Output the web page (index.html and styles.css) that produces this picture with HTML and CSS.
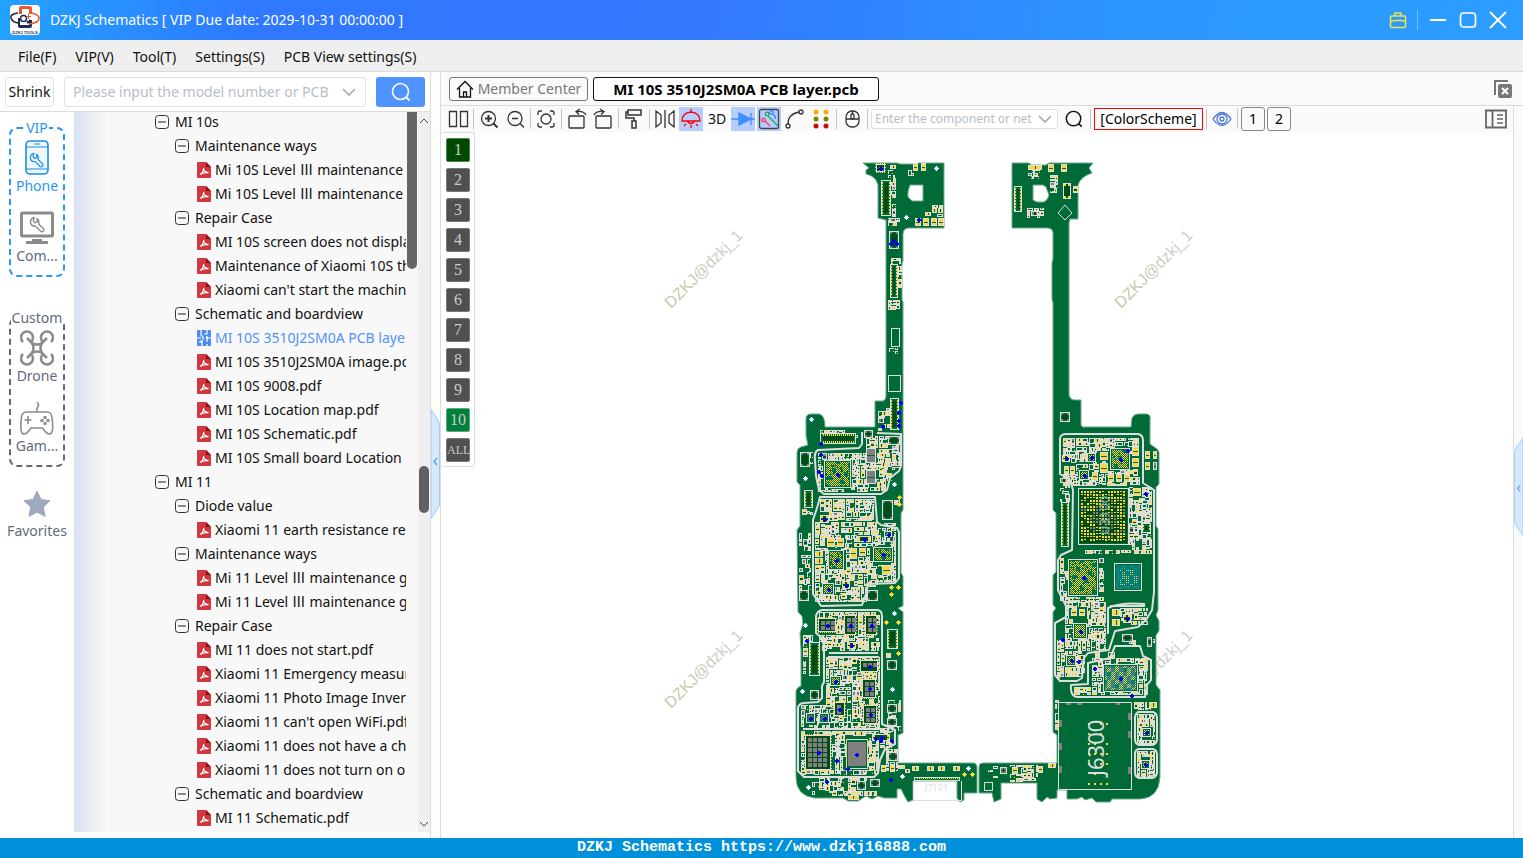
FILE: index.html
```html
<!DOCTYPE html>
<html lang="en">
<head>
<meta charset="utf-8">
<title>DZKJ Schematics</title>
<link rel="stylesheet" href="styles.css">
</head>
<body>
<svg class="defs" aria-hidden="true">
  <symbol id="pdf" viewBox="0 0 14 16"><path d="M1 0h8l5 5v10a1 1 0 0 1-1 1H1a1 1 0 0 1-1-1V1a1 1 0 0 1 1-1z" fill="#d2363f"/><path d="M9 0l5 5H9z" fill="#8f0f1a"/><path d="M3 12.500c2-1 4-4 3.500-6.500 0 3 2.500 5 5 4.500-3-.7-5.500.3-8.500 2z" fill="none" stroke="#fff" stroke-width="1.200"/></symbol>
  <symbol id="pcb" viewBox="0 0 14 16"><rect width="14" height="16" rx="1" fill="#4a8cf7"/><path d="M4 0v5l2 2v3M10 0v4H7M0 8h4M14 8h-4v4M5 16v-4H2M10 16v-2" fill="none" stroke="#fff" stroke-width="1.200"/><circle cx="10" cy="7.500" r="1.300" fill="#fff"/><circle cx="4.500" cy="11.500" r="1.300" fill="#fff"/></symbol>
  <symbol id="minus" viewBox="0 0 14 14"><rect x=".5" y=".5" width="13" height="13" rx="3" fill="none" stroke="#333"/><path d="M3 7h8" stroke="#222"/></symbol>
  <symbol id="wrench" viewBox="0 0 18 18"><path d="M5.500 1.500a5 5 0 0 0-3.800 6.300 4.800 4.800 0 0 0 5.300 3l5 5a2 2 0 0 0 3.300-2.600l-5.200-4.700a5 5 0 0 0-1.600-5.800L8.700 6.200 6 7.300 4.500 5z" fill="none" stroke="currentColor" stroke-width="1.500" stroke-linejoin="round"/></symbol>
  <symbol id="chev" viewBox="0 0 14 8"><path d="M1 1l6 6 6-6" fill="none" stroke="#a0a4ac" stroke-width="1.500"/></symbol>
  <symbol id="lens" viewBox="0 0 20 20"><circle cx="9.500" cy="9.500" r="8" fill="none" stroke="currentColor" stroke-width="1.600"/><path d="M15 15l3.500 3.500" stroke="currentColor" stroke-width="1.800"/></symbol>
</svg>

<header class="titlebar">
  <svg class="logo" viewBox="0 0 30 30"><rect width="30" height="30" rx="4" fill="#fff"/><path d="M9 9V3q0-2 2-2h8q3 0 3 2v6z" fill="#f0562d"/><path d="M12 4h7v5h-7z" fill="#fff"/><path d="M8 13v8q0 2 2 2h10q2 0 2-2v-6" fill="#1c2c58"/><path d="M22 8q8 2 7 6-1 4-10 5" fill="none" stroke="#f0562d" stroke-width="1.600"/><path d="M8 8q-8 1-7 5 2 5 9 5" fill="none" stroke="#1c2c58" stroke-width="1.600"/><path d="M10 10h9v10h-9z" fill="#fff"/><circle cx="13.500" cy="13.500" r="3" fill="none" stroke="#1c2c58" stroke-width="1.500"/><path d="M18.500 9v5M16 11.500h5" stroke="#f0562d"/><circle cx="18" cy="17" r="1.500" fill="#1c2c58"/><text x="15" y="29" class="logo-text">DZKJ TOOLS</text></svg>
  <h1 class="title">DZKJ Schematics [ VIP Due date: 2029-10-31 00:00:00 ]</h1>
  <button class="win gift" aria-label="Toolbox"><svg viewBox="0 0 18 18"><g fill="none" stroke="#f2e24b" stroke-width="1.500"><rect x="1.500" y="5" width="15" height="11.500" rx="1"/><path d="M6 5V2h6v3M2 10h3M13 10h3M5 9.500h8"/></g></svg></button>
  <span class="win-sep"></span>
  <button class="win" aria-label="Minimize"><svg viewBox="0 0 18 18"><path d="M1 9h16" stroke="#fff" stroke-width="2"/></svg></button>
  <button class="win" aria-label="Maximize"><svg viewBox="0 0 18 18"><rect x="1.500" y="2" width="15" height="14" rx="3" fill="none" stroke="#fff" stroke-width="1.700"/></svg></button>
  <button class="win" aria-label="Close"><svg viewBox="0 0 18 18"><path d="M1 1l16 16M17 1L1 17" stroke="#fff" stroke-width="1.800"/></svg></button>
</header>

<nav class="menubar">
  <button>File(F)</button><button>VIP(V)</button><button>Tool(T)</button><button>Settings(S)</button><button>PCB View settings(S)</button>
</nav>

<main class="work">
  <section class="left">
    <form class="finder">
      <button type="button" class="shrink">Shrink</button>
      <label class="combo model"><input type="text" aria-label="Model number" placeholder="Please input the model number or PCB"><svg><use href="#chev"/></svg></label>
      <button type="button" class="go" aria-label="Search"><svg><use href="#lens"/></svg></button>
    </form>
    <div class="browse">
      <nav class="side">
        <section class="group vip"><h2>VIP</h2>
          <button class="active"><svg viewBox="0 0 34 36"><rect x="6" y="1" width="22" height="33" rx="4" fill="#eef7ff" stroke="#1c8fdc" stroke-width="1.600"/><path d="M6 7h22M6 29h22M14 4h6" stroke="#1c8fdc"/><use href="#wrench" x="9" y="12" width="16" height="16"/></svg>Phone</button>
          <button><svg class="gray" viewBox="0 0 34 36"><rect x="1.500" y="3" width="31" height="23" rx="1" fill="none" stroke="currentColor" stroke-width="3"/><path d="M12 29h10v2h6v3H6v-3h6z" fill="currentColor"/><use href="#wrench" x="9" y="6" width="17" height="17"/></svg>Com...</button>
        </section>
        <section class="group custom"><h2>Custom</h2>
          <button><svg class="gray" viewBox="0 0 34 36"><g fill="none" stroke="currentColor" stroke-width="2.600"><path d="M3 12a6 6 0 1 1 8 0M31 12a6 6 0 1 0-8 0M3 24a6 6 0 1 0 8 0M31 24a6 6 0 1 1-8 0M7 8l7 7M27 8l-7 7M7 28l7-7M27 28l-7-7M12 13q5 3 10 0-3 5 0 10-5-3-10 0 3-5 0-10"/></g></svg>Drone</button>
          <button><svg class="gray" viewBox="0 0 34 36"><g fill="none" stroke="currentColor" stroke-width="1.600"><path d="M6 12h22q4 0 4.500 10 1 12-3 12-3 0-7-6H11q-4 6-7 6-4 0-3-12Q1 12 6 12zM17 12V8q3-3 0-6M8 16v8M4.500 20h7"/><circle cx="25" cy="17.500" r="1"/><circle cx="25" cy="23.500" r="1"/><circle cx="22" cy="20.500" r="1"/><circle cx="28" cy="20.500" r="1"/></g></svg>Gam...</button>
        </section>
        <button class="fav"><svg viewBox="0 0 28 28"><path d="M14 1l4 8.500 9 1.200-6.700 6.300 1.800 9.500L14 22l-8.100 4.500L7.700 17 1 10.700l9-1.200z" fill="#9ea9c0" stroke="#9ea9c0" stroke-linejoin="round"/></svg>Favorites</button>
      </nav>
      <div class="tree-wrap">
        <ul class="tree">
          <li class="l1"><svg><use href="#minus"/></svg>MI 10s</li>
          <li class="l2"><svg><use href="#minus"/></svg>Maintenance ways</li>
          <li class="l3"><svg><use href="#pdf"/></svg>Mi 10S Level Ⅲ maintenance guide.pdf</li>
          <li class="l3"><svg><use href="#pdf"/></svg>Mi 10S Level Ⅲ maintenance guide.pdf</li>
          <li class="l2"><svg><use href="#minus"/></svg>Repair Case</li>
          <li class="l3"><svg><use href="#pdf"/></svg>MI 10S screen does not display.pdf</li>
          <li class="l3"><svg><use href="#pdf"/></svg>Maintenance of Xiaomi 10S that.pdf</li>
          <li class="l3"><svg><use href="#pdf"/></svg>Xiaomi can't start the machine.pdf</li>
          <li class="l2"><svg><use href="#minus"/></svg>Schematic and boardview</li>
          <li class="l3 current"><svg><use href="#pcb"/></svg>MI 10S 3510J2SM0A PCB layer.pcb</li>
          <li class="l3"><svg><use href="#pdf"/></svg>MI 10S 3510J2SM0A image.pdf</li>
          <li class="l3"><svg><use href="#pdf"/></svg>MI 10S 9008.pdf</li>
          <li class="l3"><svg><use href="#pdf"/></svg>MI 10S Location map.pdf</li>
          <li class="l3"><svg><use href="#pdf"/></svg>MI 10S Schematic.pdf</li>
          <li class="l3"><svg><use href="#pdf"/></svg>MI 10S Small board Location</li>
          <li class="l1"><svg><use href="#minus"/></svg>MI 11</li>
          <li class="l2"><svg><use href="#minus"/></svg>Diode value</li>
          <li class="l3"><svg><use href="#pdf"/></svg>Xiaomi 11 earth resistance reference.pdf</li>
          <li class="l2"><svg><use href="#minus"/></svg>Maintenance ways</li>
          <li class="l3"><svg><use href="#pdf"/></svg>Mi 11 Level Ⅲ maintenance guide.pdf</li>
          <li class="l3"><svg><use href="#pdf"/></svg>Mi 11 Level Ⅲ maintenance guide.pdf</li>
          <li class="l2"><svg><use href="#minus"/></svg>Repair Case</li>
          <li class="l3"><svg><use href="#pdf"/></svg>MI 11 does not start.pdf</li>
          <li class="l3"><svg><use href="#pdf"/></svg>Xiaomi 11 Emergency measures.pdf</li>
          <li class="l3"><svg><use href="#pdf"/></svg>Xiaomi 11 Photo Image Inversion.pdf</li>
          <li class="l3"><svg><use href="#pdf"/></svg>Xiaomi 11 can't open WiFi.pdf</li>
          <li class="l3"><svg><use href="#pdf"/></svg>Xiaomi 11 does not have a charge.pdf</li>
          <li class="l3"><svg><use href="#pdf"/></svg>Xiaomi 11 does not turn on or.pdf</li>
          <li class="l2"><svg><use href="#minus"/></svg>Schematic and boardview</li>
          <li class="l3"><svg><use href="#pdf"/></svg>MI 11 Schematic.pdf</li>
        </ul>
        <div class="inner-thumb"></div>
        <div class="scroll"><svg viewBox="0 0 10 6"><path d="M1 5l4-4 4 4" fill="none" stroke="#444"/></svg><div class="thumb"></div><svg viewBox="0 0 10 6"><path d="M1 1l4 4 4-4" fill="none" stroke="#444"/></svg></div>
      </div>
    </div>
  </section>

  <div class="splitter"><button aria-label="Collapse file list"><svg viewBox="0 0 9 110"><path d="M0 .5l6 9q2.500 3 2.500 7v78q0 3-2.500 6l-6 9z" fill="#d6e9fd" stroke="#9cc9f5"/><path d="M6 49l-3 3.500 3 3.500" fill="none" stroke="#459ff0" stroke-width="1.200"/></svg></button></div>

  <section class="view">
    <div class="tabs">
      <button class="tab home"><svg viewBox="0 0 18 18"><path d="M1 9.500L9 1.500l8 8M3.500 8v9h11V8M7.500 17v-5h3v5" fill="none" stroke="#111" stroke-width="1.300"/></svg>Member Center</button>
      <button class="tab open">MI 10S 3510J2SM0A PCB layer.pcb</button>
      <button class="closeall" aria-label="Close all"><svg viewBox="0 0 18 18"><path d="M1 15V1h13" fill="none" stroke="#777" stroke-width="2"/><rect x="4" y="4" width="14" height="14" rx="2" fill="#777"/><path d="M8 8l6 6M14 8l-6 6" stroke="#fff" stroke-width="2"/></svg></button>
    </div>
    <div class="lower">
      <div class="stage">
        <div class="tools">
          <button aria-label="Split view"><svg viewBox="0 0 24 24"><path d="M3.500 4.500h7v15h-7zM14.500 4.500h7v15h-7z"/></svg></button><i></i>
          <button aria-label="Zoom in"><svg viewBox="0 0 24 24"><circle cx="11.500" cy="11.500" r="7"/><path d="M16.500 16.500l4 4M8 11.500h7M11.500 8v7" stroke-width="2"/></svg></button>
          <button aria-label="Zoom out"><svg viewBox="0 0 24 24"><circle cx="12" cy="11.500" r="7"/><path d="M17 16.500l4 4M9 11.500h6"/></svg></button><i></i>
          <button aria-label="Fit"><svg viewBox="0 0 24 24"><circle cx="12" cy="12" r="5"/><path d="M4 8V6q0-2 2-2h2M16 4h2q2 0 2 2v2M20 16v2q0 2-2 2h-2M8 20H6q-2 0-2-2v-2"/></svg></button><i></i>
          <button aria-label="Rotate left"><svg viewBox="0 0 24 24"><rect x="4" y="9" width="15" height="12" rx="1"/><path d="M21 8q-2-4-9-3.500M15 2l-4 2.500 3 3"/></svg></button>
          <button aria-label="Rotate right"><svg viewBox="0 0 24 24"><rect x="5" y="9" width="15" height="12" rx="1"/><path d="M3 8q2-4 9-3.500M9 2l4 2.500-3 3"/></svg></button><i></i>
          <button aria-label="Paint"><svg viewBox="0 0 24 24"><path d="M6 3h13v5H6zM6 5H4v6h8v3M10 14h4v7h-4z" stroke-width="1.500"/></svg></button><i></i>
          <button aria-label="Mirror"><svg viewBox="0 0 24 24"><path d="M3 4v16l5-4V8zM21 4v16l-5-4V8zM12 3v18"/></svg></button>
          <button class="on" aria-label="Lamp"><svg class="red" viewBox="0 0 24 24"><path d="M12 2v3M3 14q0-8 9-9 9 1 9 9zM8 14q4 5 8 0M12 18v3M7 17l-2 2M17 17l2 2"/></svg></button>
          <button class="td">3D</button>
          <button class="on" aria-label="Diode"><svg class="blue" viewBox="0 0 24 24"><path d="M0 12h24M20 6v12"/><path d="M8 6l12 6-12 6z" fill="#3f8dff"/></svg></button>
          <button class="on" aria-label="Nets"><svg viewBox="0 0 24 24"><rect x="2.500" y="2.500" width="19" height="19" rx="2" stroke="#444"/><circle cx="6.500" cy="13" r="1.800" stroke="#ff3a4c"/><path d="M8 14l5 5" stroke="#ff3a4c"/><circle cx="10" cy="7" r="1.800" stroke="#20a850"/><circle cx="14.500" cy="5.500" r="1.800" stroke="#2c86ff"/><path d="M16 7q3 2 2 5" stroke="#2c86ff"/><path d="M11 9l10 10" stroke="#20a850"/></svg></button>
          <button aria-label="Curve"><svg viewBox="0 0 24 24"><circle cx="5" cy="19" r="2"/><circle cx="18" cy="5" r="2"/><path d="M5 17Q5 7 16 5"/></svg></button>
          <button aria-label="Pins"><svg class="dots" viewBox="0 0 24 24"><g fill="#ffab00"><circle cx="7" cy="5" r="2.500"/><circle cx="17" cy="5" r="2.500"/></g><g fill="#7c8500"><circle cx="7" cy="12" r="2.500"/><circle cx="17" cy="12" r="2.500"/></g><g fill="#cf0909"><circle cx="7" cy="19" r="2.500"/><circle cx="17" cy="19" r="2.500"/></g></svg></button><i></i>
          <button aria-label="Mouse"><svg viewBox="0 0 24 24"><rect x="6" y="4" width="13" height="16" rx="6"/><path d="M6 12h13M12.500 4v3"/><rect x="11" y="7" width="3" height="5" rx="1"/></svg></button><i></i>
          <label class="combo net"><input type="text" aria-label="Component or net" placeholder="Enter the component or net"><svg><use href="#chev"/></svg></label>
          <button class="find" aria-label="Find"><svg viewBox="0 0 20 20"><use href="#lens"/></svg></button><i></i>
          <button class="scheme">[ColorScheme]</button><i></i>
          <button aria-label="Visibility"><svg viewBox="0 0 24 24"><g stroke="#4777d9"><path d="M3 12q9-13 18 0-9 13-18 0z"/><circle cx="12" cy="12" r="5"/><circle cx="12" cy="12" r="2"/></g></svg></button><i></i>
          <button class="num">1</button>
          <button class="num">2</button>
          <button class="panel" aria-label="Side panel"><svg viewBox="0 0 22 20"><path d="M1 1.500h20v17H1zM7.500 1.500v17" fill="none" stroke="#666" stroke-width="1.800"/><path d="M12 6h6M12 10h6M12 14h6" stroke="#666"/></svg></button>
        </div>
        <div class="canvas">
          <svg class="board" viewBox="441 132 1072 706" role="img" aria-label="PCB layout">
            <defs><linearGradient id="wm"><stop offset="0" stop-color="#c9c4a4"/><stop offset="1" stop-color="#d0d0d0"/></linearGradient></defs>
            <g class="marks">
              <text transform="translate(671 309) rotate(-45)">DZKJ@dzkj_1</text>
              <text transform="translate(1121 309) rotate(-45)">DZKJ@dzkj_1</text>
              <text transform="translate(671 709) rotate(-45)">DZKJ@dzkj_1</text>
              <text transform="translate(1121 709) rotate(-45)">DZKJ@dzkj_1</text>
            </g>
            <g class="sub">
              <path fill-rule="evenodd" d="M863 163L897 163 900 164H916L918 163H944V228H908Q903 229 903 234V261L902 263V300L903 302V510L901 513V573L903 576V606L898 608 903 612V733L898 735V763H973Q977 763 977 767V793H964V800L960 802 957 798V781H913V800L908 802 905 797 901 789H897V798H884L878 796 872 799 866 796 858 801H848L843 798H815Q796 796 796 777V691Q797 687 801 686V650L800 633 803 624 802 616 798 612 797 530 800 526V485L797 482V453Q797 448 801 447L808 445 806 436V419Q806 414 811 414H819Q825 415 825 427H875V401H883Q886 400 886 396V220L878 218V185Q876 176 866 174V170L869 168ZM910 185Q907 192 908 197L912 201H923V185Z"/>
              <path fill-rule="evenodd" d="M1012 163H1029L1031 165H1046L1049 163H1093L1089 168 1092 173Q1080 177 1078 185V219H1070L1069 223V395Q1070 400 1075 400H1081V425Q1082 428 1085 427H1131L1132 418Q1134 414 1138 414H1147Q1151 415 1150 420V444L1157 449 1159 452V484L1156 487V526L1158 529V610L1156 615 1159 621V631L1156 635V685L1160 690V777Q1159 798 1140 799H1112L1110 802H1096L1092 798 1085 800 1082 797 1077 799H1067V790H1057V798L1050 799 1047 797 1042 802 1037 799V783H1001V799L994 802 992 793H979V767Q979 763 983 763H1057V735L1053 732V612L1056 608 1053 605V575L1056 572V513L1053 510V303L1052 299V263L1053 259V232Q1052 228 1048 228H1012ZM1033 185V200L1037 202H1044Q1048 200 1049 195L1046 187 1043 185Z"/>
            </g>
            <g id="parts"></g>
            <g class="shield">
              <path d="M862 432V444L859 448 818 450Q814 452 815 460L816 476 819 490 824 494H881L887 490 890 478 899 471 901 466V434L877 433"/>
              <path d="M820 497H875L877 522 881 525 897 528 899 532V578L895 583 868 584 866 594 862 605 821 606 813 594V520L817 508Z"/>
              <path d="M822 610H878Q882 611 882 616V724L895 730V744L885 749 880 760 878 773 874 777H804L798 771V708Q799 703 804 703L818 702 822 698V686L824 682V640L816 633V616Q817 611 822 610ZM829 653H878M803 729H881M838 735V772M828 657H879"/>
              <path d="M1066 434H1138Q1143 435 1143 440V483L1154 490V592L1152 610 1146 620 1138 627 1115 631 1109 650 1088 653 1084 658 1082 678 1077 681H1060L1055 675V623L1066 617 1067 608 1058 590V560L1061 555 1072 550 1073 490 1070 480 1060 474V438Q1061 434 1066 434"/>
              <path d="M1115 646H1140L1143 656 1151 660V680L1147 685 1145 697H1078Q1070 697 1071 685L1088 684V663L1110 658ZM1110 606H1145M1108 634V608Q1120 602 1145 604"/>
              <path d="M1139 712H1153Q1157 713 1157 718V740Q1156 745 1151 745H1139Q1135 744 1135 739V717Q1136 712 1139 712ZM1139 749H1153Q1157 750 1157 755V773Q1156 778 1151 778H1139Q1135 777 1135 772V753Q1136 749 1139 749Z"/>
            </g>
            <g id="chips"></g>
            <g class="thin"><path d="M1058.500 702.500H1131.500V789.500H1058.500ZM1065 205l7 8-7 7-7-7zM913.500 781V800.500H961.500V781"/></g>
            <text class="silk big" transform="translate(1104 776) rotate(-90)">J6300</text>
            <text class="silk mid" transform="translate(1109 535) rotate(-90)">U3100</text>
            <text class="silk small" x="925" y="791">J7101</text>
          </svg>
          <div class="layers">
            <button class="first">1</button><button>2</button><button>3</button><button>4</button><button>5</button><button>6</button><button>7</button><button>8</button><button>9</button><button class="ten">10</button><button>ALL</button>
          </div>
        </div>
      </div>
      <div class="edge"><button aria-label="Open details"><svg viewBox="0 0 10 110"><path d="M10 .5l-7 10Q.5 14 .5 18v74q0 4 2.500 7l7 10z" fill="#d6e9fd" stroke="#9cc9f5"/><path d="M7 53l-3 3.500 3 3.500" fill="none" stroke="#459ff0" stroke-width="1.200"/></svg></button></div>
    </div>
  </section>
</main>
<footer class="status">DZKJ Schematics https://www.dzkj16888.com</footer>
<script src="board.js"></script>
</body>
</html>
```
FILE: styles.css
```css
* { box-sizing: border-box; }
body { margin: 0; height: 100vh; display: flex; flex-direction: column; overflow: hidden; font: 14px/24px "Noto Sans", "Open Sans", "Noto Sans CJK SC", sans-serif; color: #111; background: #fff; }
button { font: inherit; color: inherit; padding: 0; border: 0; background: none; cursor: pointer; }
svg { display: block; }
.defs { position: absolute; width: 0; height: 0; }

.titlebar { height: 40px; flex: none; display: flex; align-items: center; gap: 12px; padding: 0 16px 0 10px; color: #fff; background: linear-gradient(100deg, #22a3ff 0, #2f78ff 17%, #3377ff 45%, #2c97ff 75%, #2c9dff 100%); }
.logo { width: 30px; height: 30px; }
.logo-text { font: bold 4px "Liberation Sans", sans-serif; text-anchor: middle; fill: #1c2c58; }
.title { flex: 1; margin: 0 0 0 -2px; font-size: 14px; font-weight: 400; }
.win { width: 18px; height: 18px; }
.win svg { width: 18px; height: 18px; }
.win-sep { width: 1px; height: 20px; margin-right: -1px; margin-left: -2px; background: #6dbcff; }

.menubar { height: 32px; flex: none; display: flex; align-items: center; gap: 19px; padding: 2px 18px 0; background: #efefef; border-bottom: 1px solid #dcdcdc; }

.work { flex: 1; min-height: 0; display: flex; }
.left { width: 431px; flex: none; display: flex; flex-direction: column; border-right: 1px solid #dcdcdc; }
.finder { height: 40px; flex: none; display: flex; align-items: center; padding: 0 5px; border-bottom: 1px solid #dcdcdc; }
.shrink { width: 49px; height: 30px; border: 1px solid #dcdfe6; border-radius: 4px; background: #fff; }
.combo { display: flex; align-items: center; border: 1px solid #dcdfe6; border-radius: 3px; background: #fff; }
.combo input { flex: 1; min-width: 0; padding: 0; border: 0; outline: 0; background: none; font: inherit; }
.combo input::placeholder { color: #b9bdc6; opacity: 1; }
.combo svg { width: 14px; height: 8px; }
.model { flex: 1; height: 30px; margin: 0 10px; padding: 0 9px 0 8px; gap: 4px; }
.go { width: 49px; height: 30px; display: grid; place-items: center; border-radius: 3px; color: #fff; background: #4f93ff; }
.go svg { width: 20px; height: 20px; }

.browse { flex: 1; min-height: 0; display: flex; }
.side { width: 74px; flex: none; display: flex; flex-direction: column; align-items: center; padding-top: 15px; color: #626a7a; line-height: 20px; }
.side button { display: flex; flex-direction: column; align-items: center; }
.group { width: 56px; height: 150px; display: flex; flex-direction: column; align-items: center; gap: 14px; border: 2px dashed #626a7a; border-radius: 8px; }
.group h2 { margin: -11px 0 -12px; padding: 0 1px; font-size: 14px; font-weight: 400; line-height: 20px; background: #fff; }
.group svg { width: 34px; height: 36px; }
.vip { border-color: #2b96f3; }
.vip h2, .active { color: #2b96f3; }
.custom { margin-top: 40px; }
.gray { color: #8c8c8c; }
.fav { margin-top: 23px; gap: 3px; }
.fav svg { width: 28px; height: 28px; }

.tree-wrap { flex: 1; min-width: 0; display: flex; margin-bottom: 6px; background: linear-gradient(90deg, #d7e1f2 0, #eceef3 18px, #f8f8f8 34px); }
.tree { flex: 1; min-width: 0; margin: -2px 0 0; padding: 0; overflow: hidden; list-style: none; }
.tree li { height: 24px; display: flex; align-items: center; gap: 6px; white-space: nowrap; }
.tree svg { width: 14px; height: 14px; flex: none; }
.l1 { padding-left: 81px; }
.l2 { padding-left: 101px; }
.tree .l3 { padding-left: 123px; gap: 4px; }
.tree .l3 svg { height: 16px; }
.current { color: #4f93ff; }
.inner-thumb { width: 10px; height: 157px; margin: 0 1px; border-radius: 0 0 5px 5px; background: #666; }
.scroll { width: 12px; display: flex; flex-direction: column; align-items: center; padding: 6px 0 5px; background: #efefef; }
.scroll svg { width: 10px; height: 6px; }
.thumb { width: 10px; height: 47px; margin: 342px 0 auto; border-radius: 5px; background: #606060; }

.splitter { width: 10px; flex: none; display: flex; align-items: center; background: #fafffa; border-right: 1px solid #dcdcdc; }
.splitter button { width: 9px; height: 110px; margin-top: 18px; }
.splitter svg { width: 9px; height: 110px; }
.view { flex: 1; min-width: 0; display: flex; flex-direction: column; }
.tabs { height: 34px; flex: none; display: flex; align-items: center; gap: 5px; padding: 0 11px 0 8px; background: #fafafa; border-bottom: 1px solid #dcdcdc; }
.tab { height: 24px; display: flex; align-items: center; justify-content: center; border: 1px solid #111; border-radius: 3px; line-height: 20px; }
.home { width: 139px; gap: 4px; border-color: #777; color: #777; }
.home svg { width: 18px; height: 18px; }
.open { width: 286px; font-size: 15px; font-weight: 700; color: #000; background: #fff; }
.closeall { margin-left: auto; }
.closeall svg { width: 18px; height: 18px; }
.lower { flex: 1; min-height: 0; display: flex; }
.stage { flex: 1; min-width: 0; display: flex; flex-direction: column; }
.tools { height: 26px; flex: none; display: flex; align-items: center; gap: 2px; padding: 0 5px; background: #fafafa; }
.tools i { width: 1px; height: 20px; margin: 0 1px; background: #c4c4c4; }
.tools button { width: 24px; height: 24px; flex: none; display: grid; place-items: center; }
.tools button svg { width: 24px; height: 24px; fill: none; stroke: #333; stroke-width: 1.3px; }
.tools .on { background: #b6ceff; }
.tools .red { stroke: #f00; }
.tools .blue { stroke: #3f8dff; }
.tools .dots { stroke: none; }
.tools .find { width: 27px; }
.tools .find svg { width: 18px; height: 18px; stroke: none; }
.tools .net { width: 187px; height: 20px; padding: 0 5px 0 3px; gap: 4px; font-size: 12px; }
.tools .scheme { width: 109px; height: 22px; border: 1px solid #f00; color: #000; background: #fff; line-height: 18px; }
.tools .num { border: 1px solid #888; border-radius: 3px; color: #000; line-height: 20px; }
.tools .panel { margin-left: auto; }
.tools .panel svg { width: 22px; height: 20px; }
.canvas { position: relative; flex: 1; min-height: 0; }
.board { width: 100%; height: 100%; }
.layers { position: absolute; left: 0; top: 0; display: flex; flex-direction: column; gap: 6px; padding: 5px 4px 4px 5px; border: 1px solid #dcdcdc; border-left: 0; border-radius: 3px; background: #fff; }
.layers button { width: 24px; height: 24px; border: 1px solid #777; border-radius: 2px; color: #ccc; background: #505050; font: 16px/18px "Liberation Serif", serif; }
.layers button:last-child { font-size: 12px; }
.layers .first { background: #004a00; border-color: #4a804a; }
.layers .ten { background: #00803c; border-color: #5aac80; }
.edge { width: 10px; flex: none; display: flex; flex-direction: column; justify-content: center; background: #fafafa; border-left: 1px solid #dcdcdc; }
.edge button { width: 9px; height: 110px; margin-top: 30px; }
.edge svg { width: 9px; height: 110px; }
.status { height: 20px; flex: none; text-align: center; color: #fff; background: #0091da; font: bold 15px/20px "Liberation Mono", monospace; }

.marks { font-family: "Liberation Sans", sans-serif; font-size: 16px; fill: url(#wm); }
.sub { fill: #006b37; stroke: #6ca88a; stroke-width: 1px; }
.shield { fill: none; stroke: #dedede; stroke-width: 2px; stroke-linejoin: round; }
.thin { fill: none; stroke: #dedede; }
.silk { font-family: "Noto Sans", sans-serif; fill: #dedede; }
.big { font-size: 22px; }
.mid { font-size: 13px; fill: #8fc4b4; }
.small { font-size: 9px; }
```
FILE: board.js
```javascript
(function () {
  var NS = "http://www.w3.org/2000/svg";
  var SILK = "#dedede", GOLD = "#ffd633", GRAY = "#808080", DARK = "#004d18", BASE = "#006b37", BLUE = "#0000f0", TEAL = "#008078";
  var seed = 10351;
  function rnd() { seed = (seed * 1664525 + 1013904223) % 4294967296; return seed / 4294967296; }
  function pick(a, b) { return a + Math.floor(rnd() * (b - a + 1)); }

  function layer(id) {
    var order = [SILK, BASE, DARK, TEAL, GRAY, GOLD, BLUE, "#ffffff"], d = {};
    order.forEach(function (c) { d[c] = ""; });
    return {
      box: function (c, x, y, w, h) { d[c] += "M" + x + " " + y + "h" + w + "v" + h + "h" + -w + "z"; },
      flush: function () {
        order.forEach(function (c) {
          var p = document.createElementNS(NS, "path");
          p.setAttribute("d", d[c]); p.setAttribute("fill", c); p.setAttribute("shape-rendering", "crispEdges");
          document.getElementById(id).appendChild(p);
        });
      }
    };
  }
  var parts = layer("parts"), chips = layer("chips");

  /* Areas packed with passives: x, y, width, height, fill ratio */
  var areas = [
    [818,453,68,39,1],[866,436,34,34,.95],[884,470,8,12,.9],[820,499,54,22,1],[815,522,63,80,1],[878,528,18,54,1],
    [819,612,61,40,.95],[826,657,54,72,.95],[801,705,25,23,.9],[801,731,78,44,.95],[880,728,12,20,.9],
    [812,778,66,18,.65],[800,452,14,16,.8],[802,490,11,26,.6],[799,533,12,70,.7],[803,635,10,44,.85],
    [878,405,24,26,.75],[888,700,14,32,.8],[886,749,12,22,.9],
    [820,430,38,10,.8],[886,640,14,18,.5],[898,765,12,8,.7],[884,500,16,8,.5],[884,518,14,8,.8],
    [891,258,10,8,.8],[898,266,5,22,.8],[888,300,13,10,.9],[889,348,10,6,.9],[888,165,8,52,.7],[888,218,12,8,.9],
    [932,205,11,12,.7],[908,170,6,6,.9],[889,379,10,11,.5],[925,212,7,4,.9],
    [1063,438,77,48,1],[1129,487,23,63,.95],[1060,478,10,24,.7],[1082,550,70,4,.7],
    [1060,558,44,44,.85],[1065,602,41,49,1],[1057,640,8,38,.95],[1065,651,20,27,.95],[1112,608,36,18,.95],
    [1095,652,20,6,.8],[1092,658,56,37,1],[1074,687,18,8,.9],[1137,714,18,30,1],[1137,751,18,26,1],
    [1134,702,20,8,.9],[1055,700,4,30,.8],[1010,765,28,17,.95],[988,766,14,12,.5],
    [1027,208,18,10,.9],[1050,175,8,18,.8],[1073,186,6,8,.8],[1028,166,12,14,.7],[1146,634,9,12,.6],[1120,640,24,6,.7]
  ];
  /* Packages: kind, x, y, width, height */
  var packs = [
    ["bga",824,460,27,28],["gray",866,448,10,15],["gray",866,470,10,14],["qfn",888,436,12,9],["conn",820,433,36,11],
    ["qfn",800,452,10,15],["conn",804,490,9,18],["qfn",882,500,11,20],["mark",820,515,9,8],["bga",828,550,16,20],
    ["bga",873,547,20,15],["mark",857,536,14,6],["gold",827,538,8,9],["gold",837,538,7,9],["gold",850,548,7,11],["gold",859,548,7,8],["gold",815,551,8,6],["gold",815,558,8,6],["bga",822,583,12,12],["mark",842,581,8,8],["gold",882,565,9,10],["bga",884,531,8,6],
    ["quad",818,618,18,14],["quad",844,615,12,20],["quad",865,615,12,20],["conn",809,642,11,34],["quad",860,660,18,12],
    ["quad",862,679,14,19],["quad",863,705,14,19],["bga",830,676,11,10],["quad",834,702,11,14],["dice",806,713,9,10],["dice",819,713,10,10],
    ["quad",805,735,26,35],["slab",846,739,22,30],["mark",872,734,18,7],["mark",847,642,9,7],
    ["conn",887,629,11,20],["qfn",887,660,10,10],["qfn",887,704,10,9],["qfn",887,718,10,8],["qfn",888,752,10,9],["qfn",870,779,10,8],
    ["qfn",867,590,11,11],["qfn",799,590,10,11],["qfn",810,690,9,10],["qfn",864,430,9,8],["qfn",857,781,9,9],
    ["conn",881,180,10,36],["qfn",889,231,10,18],["conn",890,264,8,34],["frame",891,328,9,19],["frame",888,375,13,17],["conn",890,398,9,32],
    ["quad",876,164,9,8],["gold",913,163,5,8],["gold",921,163,5,8],["gold",915,218,6,8],["gold",923,218,6,8],["gold",931,218,6,8],["gold",938,218,6,8],
    ["conn",1014,186,8,26],["gold",1028,165,14,5],["gold",1048,164,6,8],["gold",1061,164,6,8],["mark",1063,183,8,16],
    ["qfn",1060,412,10,10],["bga",1110,448,20,22],["mark",1062,455,8,7],["bga",1087,453,9,9],["bga",1079,470,10,10],
    ["soc",1078,488,51,57],["conn",1061,502,8,45],["bga",1068,559,30,37],["chip",1114,563,28,28],
    ["bga",1073,623,14,16],["bga",1066,655,10,11],["mark",1092,665,5,6],["big",1103,664,35,28],["qfn",1122,634,11,8],["gold",1112,609,8,7],["gold",1112,619,8,7],
    ["mark",1123,614,8,9],["bga",1142,728,9,9],["bga",1141,760,9,9],["qfn",1147,637,5,10],
    ["gold",1145,451,5,8],["gold",1145,462,5,8],["gold",1153,451,4,8],["gray",1153,462,4,8],["gold",1133,488,8,8],["conn",1142,523,9,10],
    ["gold",1100,452,8,8],["gold",1100,463,8,10],["gold",1064,466,5,8],["gold",1070,466,5,8],["gold",1092,472,6,9],
    ["gold",1108,474,6,8],["gold",1116,474,6,8],["gold",1124,474,6,8],["gold",1132,447,7,9],["gold",1132,458,7,9],
    ["gold",912,766,7,5],["gold",927,766,7,5],["gold",938,766,7,5],["gold",953,766,7,5],["conn",914,777,46,4],["gold",848,795,11,5],
    ["gold",1149,702,8,6],["qfn",1000,767,7,7],["gold",1012,767,6,7],["gold",1038,766,5,7],["gold",1048,763,8,5],["gold",1071,609,6,7],["gold",1079,609,6,7],["frame",984,782,9,9],["gold",881,765,5,7],["gold",890,765,5,7]
  ];
  var cuts = packs.map(function (p) { return p.slice(1); });

  function taken(x, y, w, h) {
    return cuts.some(function (r) { return x < r[0] + r[2] && x + w > r[0] && y < r[1] + r[3] && y + h > r[1]; });
  }

  /* One passive; turned parts have their pads above each other */
  function passive(x, y, w, h, turned) {
    var k = rnd(), c = k < .88 ? GOLD : GRAY, n;
    if (k < .14) {
      parts.box(SILK, x, y, 1, h); parts.box(SILK, x, y, w, 1);
      parts.box(GOLD, x + w - 1, y + h - 1, 1, 1);
      return;
    }
    parts.box(SILK, x, y, w, h);
    if (w < 3 || h < 3) {
      parts.box(k < .6 ? GOLD : DARK, x + (w > 2 ? 1 : 0), y + (h > 2 ? 1 : 0), 1, 1);
      return;
    }
    parts.box(k < .5 ? BASE : DARK, x + 1, y + 1, w - 2, h - 2);
    if (k < .32) return;
    if (turned) {
      n = Math.max(1, Math.floor(h / 2) - 1);
      parts.box(c, x + 1, y + 1, w - 2, n);
      parts.box(c, x + 1, y + h - 2, w - 2, 1);
    } else {
      n = Math.max(1, Math.floor(w / 2) - 1);
      parts.box(c, x + 1, y + 1, n, h - 2);
      parts.box(c, x + w - 2, y + 1, 1, h - 2);
    }
  }

  function block(bx, by, bw, bh, fill) {
    var turned = rnd() < .5, lenU = turned ? bh : bw, lenV = turned ? bw : bh;
    for (var v = 0; v < lenV - 1;) {
      var row = Math.min(pick(3, 5), lenV - v);
      for (var u = 0; u < lenU - 1;) {
        var n = Math.min(pick(2, 7), lenU - u);
        var x = turned ? bx + v : bx + u, y = turned ? by + u : by + v;
        while (n > 2 && taken(x, y, turned ? row : n, turned ? n : row)) n--;
        var w = turned ? row : n, h = turned ? n : row;
        if (rnd() < fill && !taken(x, y, w, h)) passive(x, y, w, h, turned);
        u += n + (rnd() < .3 ? 1 : 0);
      }
      v += row + (rnd() < .2 ? 1 : 0);
    }
  }
  areas.forEach(function (a) {
    for (var y = a[1]; y < a[1] + a[3] - 1; y += 13)
      for (var x = a[0]; x < a[0] + a[2] - 1; x += 13)
        block(x, y, Math.min(13, a[0] + a[2] - x), Math.min(13, a[1] + a[3] - y), a[4]);
  });

  function frame(x, y, w, h) {
    chips.box(SILK, x, y, w, h);
    chips.box(BASE, x + 1, y + 1, w - 2, h - 2);
  }
  function dot(x, y) { chips.box(BLUE, x - 1, y, 4, 2); chips.box(BLUE, x, y - 1, 2, 4); }

  packs.forEach(function (p) {
    var t = p[0], x = p[1], y = p[2], w = p[3], h = p[4], i, j, c;
    frame(x, y, w, h);
    if (t === "gold" || t === "gray") {
      c = t === "gold" ? GOLD : GRAY;
      if (w > h) {
        chips.box(c, x + 1, y + 1, Math.floor(w / 2) - 1, h - 2);
        chips.box(c, x + Math.floor(w / 2) + 1, y + 1, w - Math.floor(w / 2) - 2, h - 2);
      } else {
        chips.box(c, x + 1, y + 1, w - 2, Math.floor(h / 2) - 1);
        chips.box(c, x + 1, y + Math.floor(h / 2) + 1, w - 2, h - Math.floor(h / 2) - 2);
      }
    } else if (t === "soc") {
      chips.box(DARK, x + 2, y + 2, w - 4, h - 4);
      for (j = y + 3; j < y + h - 3; j += 3) for (i = x + 3; i < x + w - 3; i += 3) {
        var mid = Math.abs(i - x - w / 2) < 13 && Math.abs(j - y - h / 2) < 15, r = rnd();
        c = r < (mid ? .5 : .86) ? GOLD : (r < .92 ? GRAY : null);
        if (c) chips.box(c, i, j, 2, r < .3 ? 1 : 2);
      }
    } else if (t === "bga" || t === "chip" || t === "big" || t === "dice") {
      if (t === "bga" || t === "dice") chips.box(BASE, x + 1, y + 1, w - 2, h - 2);
      else chips.box(TEAL, x + 2, y + 2, w - 4, h - 4);
      for (j = y + 2; j < y + h - 2; j++) for (i = x + 2; i < x + w - 2; i++) {
        if (t === "chip" ? (i % 2 || j % 2) : (i + j) % 2) continue;
        var edge = i - x < 6 || x + w - i < 6 || j - y < 6 || y + h - j < 6;
        var patch = (((i - x) >> 2) * 3 + ((j - y) >> 2) * 5) % 7;
        if (t === "bga") c = w > 14 && patch === 2 ? TEAL : (w > 14 && rnd() < .15 ? null : GOLD);
        else if (t === "big") c = patch < 3 ? GOLD : patch < 6 ? GRAY : null;
        else if (t === "chip") c = edge ? (patch < 4 ? SILK : GRAY) : (patch < 4 ? GOLD : null);
        else c = GRAY;
        if (c) chips.box(c, i, j, 1, 1);
      }
      if (t !== "chip") dot(x + (w >> 1), y + (h >> 1));
    } else if (t === "quad") {
      chips.box(DARK, x + 1, y + 1, w - 2, h - 2);
      for (j = y + 3; j + 4 < y + h; j += 5) for (i = x + 3; i + 3 < x + w; i += 5) chips.box(GRAY, i, j, 4, 4);
      for (i = x; i < x + w; i += 2) { chips.box(GOLD, i, y - 1, 1, 1); chips.box(GOLD, i, y + h, 1, 1); }
      for (j = y; j < y + h; j += 3) { chips.box(GOLD, x - 1, j, 1, 1); chips.box(GOLD, x + w, j, 1, 1); }
      dot(x + (w >> 1), y + (h >> 1));
    } else if (t === "slab") {
      chips.box(GRAY, x + 2, y + 3, w - 4, h - 6);
      for (i = y; i < y + h; i += 2) { chips.box(GOLD, x, i, 1, 1); chips.box(GOLD, x + w - 1, i, 1, 1); }
      for (i = y + 5; i < y + 24; i += 2) chips.box(SILK, x + 9, i, 5, 1);
      dot(x + 10, y + 15);
    } else if (t === "conn") {
      if (w > 6 && h > 6) chips.box(DARK, x + 3, y + 3, w - 6, h - 6);
      if (h > w) for (i = y + 2; i < y + h - 2; i += 3) { chips.box(GOLD, x + 1, i, 1, 2); chips.box(GOLD, x + w - 2, i, 1, 2); }
      else for (i = x + 3; i < x + w - 2; i += 2) { chips.box(GOLD, i, y + 1, 1, h > 6 ? 2 : 1); if (h > 6) chips.box(GOLD, i, y + h - 3, 1, 2); }
    } else if (t === "qfn") {
      chips.box(DARK, x + 2, y + 2, w - 4, h - 4);
      chips.box(GRAY, x + 1, y + 1, 2, 2); chips.box(GRAY, x + w - 3, y + 1, 2, 2);
      chips.box(GRAY, x + 1, y + h - 3, 2, 2); chips.box(GRAY, x + w - 3, y + h - 3, 2, 2);
    } else if (t === "mark") {
      chips.box(DARK, x + 1, y + 1, w - 2, h - 2);
      chips.box(GOLD, x + 1, y + 1, 2, 2); chips.box(GOLD, x + w - 3, y + h - 3, 2, 2);
      chips.box(GOLD, x + w - 3, y + 1, 2, 2); chips.box(GOLD, x + 1, y + h - 3, 2, 2);
      if (h < 14) dot(x + (w >> 1), y + (h >> 1));
    }
  });

  /* Fiducials */
  [[811,419],[805,478],[894,484],[894,613],[805,625],[802,691],[892,689],[808,787],[902,776],[968,768],[936,168],[906,217]].forEach(function (m) {
    chips.box(TEAL, m[0] - 2, m[1] - 2, 5, 5);
    chips.box("#ffffff", m[0] - 2, m[1], 5, 1); chips.box("#ffffff", m[0], m[1] - 2, 1, 5); chips.box("#ffffff", m[0] - 1, m[1] - 1, 3, 3);
  });
  /* Gold test points */
  [[899,497],[899,504],[891,587],[898,587],[891,594],[886,622],[898,622],[898,653],[964,774],[972,774]].forEach(function (m) {
    chips.box(GOLD, m[0] - 2, m[1], 5, 1); chips.box(GOLD, m[0], m[1] - 2, 1, 5); chips.box(GOLD, m[0] - 1, m[1] - 1, 3, 3);
  });
  [[893,240],[896,243],[890,243],[898,412],[898,420],[898,425],[882,426],[820,443],[818,471],[821,475],[820,454],[900,402],[806,640],[875,738],[880,740],[891,740],[836,760],[847,768],[826,781],[890,779],[1131,695],[1145,493],[1127,450],[1062,639],[1078,661],[918,219]].forEach(function (m) { dot(m[0], m[1]); });

  /* Shield can tabs and test pads around J6300 */
  [[1066,702,5],[1077,702,5],[1116,702,4]].forEach(function (m) { chips.box(GRAY, m[0], m[1], m[2], 3); });
  [[1059,720],[1059,743],[1059,766],[1128,713],[1128,731],[1128,767]].forEach(function (m) { chips.box(GRAY, m[0], m[1], 3, 7); });
  for (var r = 723; r < 790; r += 10) [1088, 1094, 1100, 1106].forEach(function (x) { if (rnd() < .75) chips.box(GOLD, x, r, 2, 2); });

  parts.flush();
  chips.flush();
})();
```
